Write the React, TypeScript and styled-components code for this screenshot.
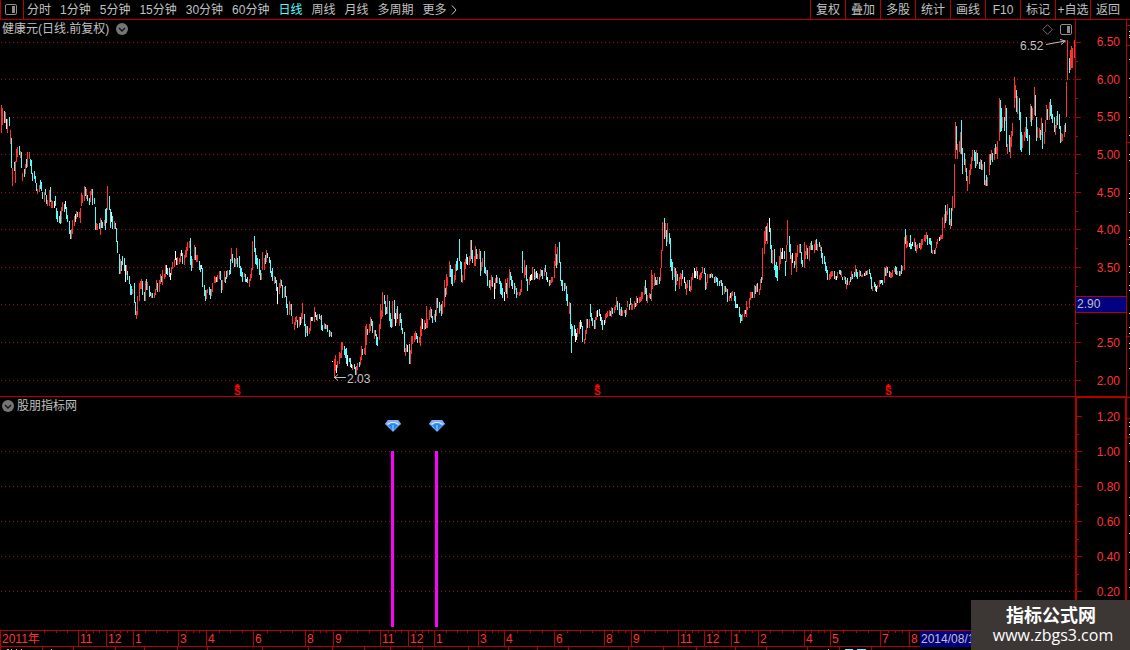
import React from "react";
import styled, { createGlobalStyle, css } from "styled-components";

const LINE = "#b40000";
const RED = "#ff3232";
const CYAN = "#54fcfc";
const GREY = "#c0c0c0";
const NAVY = "#000080";

const GlobalStyle = createGlobalStyle`
  * { box-sizing: border-box; }
  body { margin: 0; background: #000; }
  ul, ol, h1, h2, p { margin: 0; padding: 0; list-style: none; font: inherit; }
  button { margin: 0; padding: 0; border: 0; background: none; color: inherit; font: inherit; cursor: pointer; }
`;

/* Each bar: x, colour key (r rise, c fall, w flat), top-bottom */
const BARS = `
1r105-133 2r108-125 4c111-123 5r112-123 6w119-129 7r119-133 9c117-126 10r130-144 11c138-168 12r168-186 14c162-171 15r161-183 16r149-162 17r147-157 19c146-155 20r151-158 21c152-168 22r173-181 24c169-177 25r164-174 26c159-168 27r152-167 29r152-159 30c159-166 31c160-174 32c173-181 34c171-179 35c176-183 36c183-191 37r189-194 39r185-192 40c180-189 41c182-191 42c192-199 44r192-202 45c189-195 46c195-204 47r200-206 49r190-206 50c187-202 51r200-208 52r201-208 54w201-208 55c196-206 56c208-219 57c211-222 59c216-223 60c211-224 61r207-223 62r202-211 64c204-212 65w201-209 66c207-219 67c215-222 69c221-234 70c230-239 71r229-239 72r220-234 74r216-226 75w214-222 76r211-219 77c212-217 79r212-218 80r208-223 81r193-206 82r195-203 84r186-201 85c187-196 86r189-199 87c195-201 89c198-205 90r191-202 91r189-195 92c189-205 94c198-204 95c207-230 96r223-230 97r224-230 99c223-229 100r218-235 101c220-228 102c222-228 104r220-226 105c209-230 106c208-223 107r186-210 109c196-210 110c209-228 111w212-222 112c216-229 114r221-229 115c223-229 116c228-242 117c241-253 119c254-274 120r259-274 121c261-271 122c256-265 124c258-271 125w265-282 126r265-275 127c271-280 129c276-284 130c284-295 131c286-295 132r289-294 134c283-303 135c302-315 136r311-319 137r296-315 139r283-301 140r281-289 141r279-289 142c281-295 144c292-301 145r281-301 146c279-290 147r282-290 149c286-297 150c292-296 151r293-298 152c293-298 154r293-298 155r289-295 156r280-290 157c283-292 159r280-292 160r274-284 161c276-282 162r270-285 164r274-279 165r265-277 166w265-274 167c268-275 169c268-277 170w273-280 171r267-275 172r262-269 174r259-267 175w251-260 176w258-265 177r257-265 179r258-264 180r253-262 181w250-256 182c253-264 184r255-265 185r250-258 186r247-257 187r242-251 189r241-248 190c238-265 191c256-271 192r259-268 194r245-260 195c247-260 196r255-262 197r255-262 199c261-270 200c265-272 201w265-269 202c268-287 204c285-296 205c290-301 206r290-299 207r289-293 209c287-295 210c289-299 211r289-296 212r283-292 214r276-283 215r277-283 216w277-282 217r275-282 219r271-279 220c271-280 221c280-293 222r280-290 224r271-282 225c277-283 226c271-279 227r270-277 229c270-275 230c259-274 231r248-261 232c254-263 234c258-267 235r259-267 236r248-264 237c258-267 239c256-268 240c266-276 241c268-277 242c272-282 244r273-277 245c274-282 246w279-282 247c277-283 249r279-287 250r274-281 251r268-278 252r241-270 254c236-252 255c248-264 256c255-265 257c258-269 259c259-275 260c270-280 261r273-280 262r252-270 264r258-270 265c255-264 266r250-262 267c253-258 269c257-263
270c260-273 271c271-277 272c268-281 274r276-284 275c277-283 276c280-291 277w287-304 279r283-294 280r279-288 281c280-286 282c285-298 284r287-298 285c286-297 286c296-308 287c304-315 289r301-315 290r304-310 291c304-316 292r316-324 294r322-330 295r317-325 296r316-322 297c320-328 299r317-327 300w317-325 301r313-323 302r303-319 304c314-326 305c324-337 306r326-333 307c326-336 309r328-334 310r317-331 311w317-321 312c317-321 314r307-322 315w312-317 316c315-320 317r314-321 319c314-319 320r316-320 321c315-330 322c325-331 324r323-329 325c324-329 326r325-329 327c325-332 329c330-337 330r331-336 331c332-337 332w361-362 334r359-378 335r355-371 336w365-373 337r361-368 339r352-364 340r353-358 341r342-358 342r342-350 344c346-355 345c349-358 346c348-364 347w355-366 349c358-362 350c358-367 351w364-368 352r365-370 354c364-369 355c367-375 356r366-375 357r363-370 359c362-367 360r357-365 361r346-360 362c349-355 364r348-354 365r326-355 366r324-345 367c329-335 369r324-333 370r317-331 371c319-326 372c321-333 374r330-339 375c330-336 376c334-345 377c337-346 379r324-340 380r304-329 381r310-319 382r292-317 384c295-304 385c301-315 386c307-314 387r295-314 389c301-321 390c313-327 391c319-328 392r301-327 394c300-319 395w313-326 396r309-323 397c306-319 399r314-326 400c313-323 401c319-330 402c328-334 404c332-352 405r348-356 406r344-352 407w345-352 409c344-364 410r350-364 411r336-354 412r336-344 414r333-342 415r331-340 416c333-339 417c336-343 419r337-343 420r326-346 421r318-336 422w319-329 424r320-330 425c323-329 426r306-328 427r319-328 429r310-320 430r307-317 431c309-318 432c316-323 434r314-320 435c310-322 436r298-316 437c298-308 439c302-313 440r305-311 441c304-316 442r301-314 444r280-307 445c288-297 446r274-295 447r277-286 449r261-277 450c265-277 451c269-284 452c269-286 454r275-283 455r264-280 456c261-271 457c258-270 459c239-261 460c261-269 461c262-282 462r275-283 464r262-280 465r259-269 466c254-264 467w257-265 469r256-265 470r240-261 471c240-259 472c250-263 474r256-266 475r246-266 476c249-259 477r254-259 479r249-259 480c251-276 481r262-271 482r258-267 484c251-273 485c267-274 486r270-276 487c270-286 489c280-288 490r280-290 491r275-286 492c277-287 494w283-299 495r278-289 496c275-283 497r277-283 499c278-284 500c281-294 501c283-295 502c288-298 504w292-301 505r279-292 506c283-294 507r278-298 509r269-288 510c272-280 511c276-286 512c280-289 514c283-294 515r286-290 516c288-298 517r292-295 519r292-296 520r289-295 521r280-292 522c251-273 524r260-278 525r267-275 526c265-281 527c279-291 529r277-285 530w275-281 531w274-280 532r267-280 534c269-280 535r272-279 536w271-278 537c273-279 539r274-280 540r269-277 541c270-276 542c270-279 544r268-276 545c265-272 546c272-280 547w277-282 549c280-286 550r280-285 551r277-283 552r277-282 554r261-278 555r244-266 556c254-268 557r247-265 559c242-263
560c262-281 561c280-286 562c280-291 564c283-291 565r283-289 566c286-301 567c294-306 569r302-314 570c303-329 571c324-353 572c326-336 574c325-336 575w329-342 576w333-340 577r328-337 579r322-334 580w320-329 581c322-327 582c326-342 584r339-344 585r330-340 586r319-334 587c319-328 589r319-328 590c304-317 591c313-321 592c318-326 594c320-329 595r317-329 596r311-320 597w310-317 599c309-316 600w314-321 601c317-325 602c320-330 604w320-325 605r314-323 606r313-318 607r311-317 609r310-316 610c311-316 611r307-317 612c308-314 614r307-313 615r305-310 616r297-307 617c301-310 619c303-315 620r309-316 621c307-316 622r310-316 624r310-313 625c310-317 626r308-315 627r301-307 629c304-310 630c298-305 631r303-310 632r304-310 634r301-309 635c303-307 636r296-306 637w298-303 639r297-303 640r297-302 641r292-301 642r292-299 644r286-295 645c280-294 646c288-301 647r295-303 649r293-298 650c294-299 651r270-301 652r275-289 654r273-286 655c277-285 656c280-285 657r277-285 659c277-284 660r268-281 661r250-268 662r222-251 664c218-239 665r223-237 666c230-246 667r223-242 669c233-244 670c238-267 671c259-271 672c262-280 674r267-277 675c268-291 676r271-285 677c274-281 679r277-289 680r273-279 681r274-286 682c270-279 684w277-283 685c282-289 686r284-295 687r280-288 689c280-291 690r286-292 691r277-290 692r273-280 694w268-278 695w271-278 696r267-276 697c271-279 699r275-280 700r273-280 701r272-278 702r267-273 704c268-274 705c273-290 706r282-289 707r274-283 709r274-278 710c274-278 711r273-277 712c274-278 714c277-283 715r276-283 716c277-282 717c278-286 719c281-286 720r280-283 721c280-286 722c283-295 724r286-294 725c286-292 726r288-292 727c289-302 729r296-301 730w293-298 731r292-301 732r291-296 734c292-301 735c296-308 736c304-308 737w304-308 739c307-317 740c314-323 741c315-321 742r314-321 744r310-317 745w310-314 746r301-317 747r307-310 749r298-308 750r292-300 751r292-298 752c292-298 754r285-298 755c286-294 756r284-292 757c283-292 759r289-295 760r279-290 761c277-283 762r248-280 764r231-254 765r227-244 766c226-241 767r223-244 769w218-232 770c228-249 771c245-263 772r250-264 774c249-270 775c265-277 776c262-278 777c266-281 779r256-270 780r248-264 781c252-259 782w248-259 784c251-259 785c261-276 786r245-262 787r220-245 789c236-252 790c244-259 791r255-275 792w253-263 794c261-268 795r253-265 796r253-272 797r245-257 799r244-253 800c244-253 801c252-264 802c260-267 804r242-268 805r251-259 806r245-255 807c248-259 809r246-261 810r243-250 811c241-250 812c245-250 814r244-253 815r240-250 816c239-250 817r244-251 819c242-247 820r245-251 821c247-258 822c253-264 824c256-264 825c262-271 826c266-273 827c270-280 829r274-280
830r272-279 831r271-277 832r271-276 834c271-279 835r276-280 836w276-280 837r272-278 839c270-274 840c270-275 841r271-277 842c277-280 844r276-280 845c277-284 846r280-289 847c278-285 849r281-285 850c277-282 851r271-280 852c274-279 854c272-277 855r265-276 856c269-277 857c272-279 859r270-277 860c271-276 861r275-277 862r274-277 864w273-276 865r271-276 866c271-275 867r270-275 869c269-274 870c273-279 871c277-289 872r286-291 874c282-287 875c284-291 876w286-292 877r285-289 879r280-287 880c280-284 881w280-283 882c280-285 884r267-283 885c268-276 886r266-276 887c267-273 889c271-277 890r272-278 891r273-278 892r270-277 894r268-272 895c266-274 896c267-275 897r271-275 899c271-276 900r271-276 901c265-274 902r266-271 904r237-270 905c229-244 906r235-248 907r241-247 909w243-247 910c235-249 911c244-249 912w242-246 914r238-247 915c242-251 916r245-253 917r244-249 919c243-248 920r243-250 921r239-249 922r239-245 924r235-241 925r235-242 926r232-239 927c235-245 929c238-244 930c238-245 931c241-253 932r250-254 934c250-254 935r248-254 936r242-248 937r239-244 939w237-241 940r235-240 941r235-239 942r217-239 944r214-228 945c205-223 946r211-221 947r204-215 949c208-225 950r219-229 951c208-226 952r196-211 954r164-208 955r122-159 956c126-150 957r144-159 959r141-152 960r132-154 961c120-154 962c148-174 964c153-165 965r159-172 966c168-181 967r176-191 969r170-184 970r164-175 971r157-169 972r150-161 974c150-161 975c152-168 976r150-166 977c153-164 979c162-169 980r159-169 981c160-170 982r164-170 984c162-185 985r180-186 986c175-186 987r177-186 989r154-175 990c154-165 991r150-160 992c153-162 994r148-160 995c144-154 996r147-154 997r141-159 999r98-141 1000c100-132 1001c108-131 1002r117-128 1004c117-131 1005r105-121 1006c108-147 1007r144-154 1009c135-152 1010r137-158 1011r131-147 1012r123-136 1014r77-108 1015r85-98 1016c90-112 1017r96-114 1019c98-120 1020c112-150 1021c132-152 1022r135-148 1024r132-141 1025r127-137 1026c117-138 1027c129-141 1029c135-155 1030r104-122 1031c106-126 1032r108-120 1034r87-115 1035c95-116 1036c117-141 1037r127-138 1039r128-138 1040c130-140 1041r118-135 1042c123-149 1044r132-144 1045r120-132 1046r105-120 1047c109-120 1049r102-120 1050c99-116 1051c105-119 1052c114-123 1054c117-132 1055r125-135 1056r116-128 1057c111-125 1059c114-129 1060c126-143 1061r133-142 1062r134-141 1064r125-137 1065c123-132 1066r82-117 1067r40-80 1069c58-73 1070r50-70 1071r46-68 1072r48-68 1074r40-58
`;

const paths: Record<string, string> = { r: "", c: "", w: "" };
for (const [, x, key, top, bottom] of BARS.matchAll(/(\d+)([rcw])(\d+)-(\d+)/g)) {
  const h = Number(bottom) - Number(top);
  paths[key] += `M${x} ${top}h1v${h}h-1z`;
}

const PLOT_W = 1075;
const PRICE_TOP = 20;
const PRICE_H = 376;
const SIGNAL_TOP = 397;
const SIGNAL_H = 233;

const PERIODS = ["分时", "1分钟", "5分钟", "15分钟", "30分钟", "60分钟", "日线", "周线", "月线", "多周期"];
const ACTIONS = ["复权", "叠加", "多股", "统计", "画线", "F10", "标记", "+自选", "返回"];
const PRICES = ["6.50", "6.00", "5.50", "5.00", "4.50", "4.00", "3.50", "", "2.50", "2.00"];
const PRICE_ROWS = [42, 79, 117, 154, 192, 229, 267, 304, 342, 380];
const PRICE_MINOR = [61, 98, 136, 173, 211, 248, 286, 323, 361];
const LEVELS = ["1.20", "1.00", "0.80", "0.60", "0.40", "0.20"];
const LEVEL_ROWS = [416, 451, 486, 521, 556, 591];
const LEVEL_MINOR = [434, 469, 504, 539, 574];
const SIGNALS = [391, 435];
const DIVIDENDS = [237, 597, 888];
const MONTHS: [string, number][] = [
  ["2011年", 78], ["11", 28], ["12", 27], ["1", 45], ["3", 28], ["4", 47], ["6", 52], ["8", 28],
  ["9", 47], ["11", 28], ["12", 26], ["1", 44], ["3", 26], ["4", 50], ["6", 50], ["8", 27], ["9", 47],
  ["11", 26], ["12", 27], ["1", 27], ["2", 46], ["4", 26], ["5", 50], ["7", 29], ["8", 11],
];
const CURSOR_SPAN = 210;
const TIMELINE_TRACKS = [...MONTHS.map(([, span]) => span), CURSOR_SPAN]
  .map((span) => `minmax(0, ${span}fr)`)
  .join(" ");
const EDGE_TICKS = [25, 45, 142, 239, 336, 397, 418, 437];
const EDGE_DOTS = [
  31, 35, 37, 59, 78, 97, 117, 135, 154, 160, 193, 198, 212, 230, 237, 244, 266, 272, 285, 290, 313, 327,
  333, 343, 348, 368, 422, 426, 434, 443, 461, 497, 515, 533, 552, 569, 587,
];
const FOOT_TICKS = [0, 42, 73, 115, 144, 177, 207, 262, 308, 332, 364, 390, 422, 468, 508, 537, 568, 628, 663, 696, 735, 766, 807, 839, 871];
const FOOT_MARKS: [number, number, string][] = [
  [7, 2, GREY], [11, 1, GREY], [16, 1, GREY], [21, 1, GREY], [51, 1, GREY], [828, 1, GREY], [845, 8, CYAN], [857, 9, CYAN],
];

const Window = styled.main`
  position: relative;
  display: flex;
  flex-direction: column;
  min-height: 100vh;
  overflow: hidden;
  background: #000;
  color: ${GREY};
  font-family: "Liberation Sans", "Noto Sans CJK SC", sans-serif;
  font-size: 12px;
  line-height: 14px;
`;

const Toolbar = styled.header`
  display: flex;
  height: 20px;
  border-bottom: 1px solid ${LINE};
`;

const PanelToggle = styled.button`
  display: flex;
  align-items: center;
  width: 24px;
  height: 19px;
  padding-left: 4px;
  border: solid ${LINE};
  border-width: 0 1px;
`;

const Periods = styled.nav`
  display: flex;
  flex: 1;
  align-items: center;
  gap: 9px;
  padding-left: 3px;
  white-space: nowrap;
`;

const Period = styled.button<{ $active?: boolean }>`
  display: flex;
  align-items: center;
  gap: 4px;
  color: ${(p) => (p.$active ? CYAN : GREY)};
`;

const Actions = styled.nav`
  display: flex;
  padding-right: 5px;
`;

const Action = styled.button`
  width: 35px;
  height: 19px;
  border-left: 1px solid ${LINE};
  text-align: center;
  white-space: nowrap;
`;

const Body = styled.div`
  display: flex;
  flex: 1;
`;

const Panels = styled.div`
  display: flex;
  flex: 1;
  flex-direction: column;
  min-width: 0;
`;

const Panel = styled.section<{ $share: number; $divided?: boolean }>`
  display: flex;
  flex: ${(p) => p.$share} 1 0;
  ${(p) => p.$divided && css`border-bottom: 1px solid ${LINE};`}
`;

const Plot = styled.div`
  position: relative;
  flex: 1;
  min-width: 0;
`;

const PlotSvg = styled.svg`
  position: absolute;
  inset: 0;
  width: 100%;
  height: 100%;
`;

const Heading = styled.div<{ $gap: number }>`
  position: absolute;
  top: 2px;
  left: 2px;
  display: flex;
  align-items: center;
  gap: ${(p) => p.$gap}px;
  height: 14px;
`;

const RoundButton = styled.button`
  display: flex;
  width: 12px;
  height: 12px;
`;

const PlotTools = styled.div`
  position: absolute;
  top: 4px;
  right: 3px;
  display: flex;
  gap: 7px;
  height: 11px;
`;

const Marker = styled.div<{ $x: number; $y: number; $h: number; $top: number }>`
  position: absolute;
  left: ${(p) => (p.$x / PLOT_W) * 100}%;
  top: ${(p) => ((p.$y - p.$top) / p.$h) * 100}%;
  display: flex;
`;

const Axis = styled.div<{ $heavy?: boolean }>`
  position: relative;
  display: flex;
  width: 51px;
  border-left: ${(p) => (p.$heavy ? 2 : 1)}px solid ${LINE};
  ${(p) => p.$heavy && css`border-top: 1px solid ${LINE}; border-right: 1px solid ${LINE};`}
`;

const AxisTicks = styled.svg`
  flex: none;
  width: 5px;
  height: 100%;
`;

const AxisLabels = styled.ol<{ $top: number; $bottom: number; $right: number }>`
  display: flex;
  flex: 1;
  flex-direction: column;
  justify-content: space-between;
  padding: ${(p) => p.$top}px ${(p) => p.$right}px ${(p) => p.$bottom}px 0;
  color: ${RED};
  text-align: right;
  li { height: 14px; }
`;

const CursorPrice = styled.output`
  position: absolute;
  top: ${(276 / PRICE_H) * 100}%;
  left: 0;
  right: 0;
  height: 17px;
  padding-left: 1px;
  border: solid ${LINE};
  border-width: 1px 0;
  background: ${NAVY};
  color: ${GREY};
  line-height: 15px;
`;

const Edge = styled.svg`
  flex: none;
  width: 4px;
  height: auto;
`;

const Timeline = styled.ol`
  display: grid;
  grid-template-columns: ${TIMELINE_TRACKS};
  height: 17px;
  border: solid ${LINE};
  border-width: 1px 0;
  color: ${RED};
`;

const Month = styled.li`
  display: flex;
  flex-direction: column;
  border-left: 1px solid ${LINE};
  padding-left: 1px;
  white-space: nowrap;
  line-height: 13px;
`;

const MonthTicks = styled.span<{ $first: boolean }>`
  display: flex;
  justify-content: space-evenly;
  height: 2px;
  ${(p) => p.$first && css`padding-left: 32px;`}
  i { width: 1px; background: ${LINE}; }
`;

const CursorDate = styled.li`
  padding-left: 1px;
  background: ${NAVY};
  color: ${GREY};
  line-height: 16px;
`;

const Foot = styled.svg`
  display: block;
  width: 100%;
  height: 3px;
`;

const Watermark = styled.aside`
  position: absolute;
  right: 0;
  bottom: 0;
  width: 159px;
  height: 50px;
  padding: 4px 0 0 5px;
  background: #3c3735;
  color: #fff;
  text-align: center;
`;

const SiteName = styled.p`
  padding-right: 4px;
  font: bold 18px/21px "Noto Sans CJK SC", sans-serif;
`;

const SiteLink = styled.a`
  display: block;
  color: inherit;
  font: 16px/20px "Open Sans", sans-serif;
  text-decoration: none;
`;

const PanelIcon = () => (
  <svg width="12" height="11" viewBox="0 0 12 11" fill="none" aria-hidden="true">
    <rect x=".5" y=".5" width="11" height="10" rx="1.5" stroke="#8c8c8c" />
    <rect x="7" y="2" width="3" height="7" fill="#8c8c8c" />
  </svg>
);

const ChevronDisc = () => (
  <svg width="12" height="12" viewBox="0 0 12 12" aria-hidden="true">
    <circle cx="6" cy="6" r="6" fill="#757575" />
    <path d="M3 5l3 3 3-3" fill="none" stroke="#141414" strokeWidth="1.4" />
  </svg>
);

const Gem = () => (
  <svg width="16" height="12" viewBox="0 0 16 12" aria-hidden="true">
    <path d="M3 0h10l3 4-8 8-8-8z" fill="#4a94ee" />
    <path d="M3 0h10l3 4-2 1-3-2H5L2 5 0 4z" fill="#86acf0" />
    <path d="M2 4l4-2h4l4 2-1 1-3-2H6L3 5z" fill="#d9ecff" />
    <path d="M4 5l4-1 4 1-4 6z" fill="#1f86f2" />
    <path d="M8 5v6" stroke="#a9d8ff" strokeWidth="1" />
    <path d="M3 6l2 2" stroke="#7db9ff" strokeWidth="1" />
  </svg>
);

const Grid = ({ rows }: { rows: number[] }) => (
  <g stroke="#9c0c0c" strokeDasharray="1 3">
    {rows.map((y) => (
      <path key={y} d={`M1 ${y + 0.5}H${PLOT_W}`} />
    ))}
  </g>
);

const Ticks = ({ view, major, minor }: { view: string; major: number[]; minor: number[] }) => (
  <AxisTicks viewBox={view} preserveAspectRatio="none" shapeRendering="crispEdges" fill={LINE} aria-hidden="true">
    {major.map((y) => <rect key={y} x="0" y={y} width="5" height="1" />)}
    {minor.map((y) => <rect key={y} x="0" y={y} width="2" height="1" />)}
  </AxisTicks>
);

export default function App() {
  return (
    <Window>
      <GlobalStyle />
      <Toolbar>
        <PanelToggle aria-label="面板"><PanelIcon /></PanelToggle>
        <Periods>
          {PERIODS.map((label) => (
            <Period key={label} $active={label === "日线"}>{label}</Period>
          ))}
          <Period>
            更多
            <svg width="6" height="10" viewBox="0 0 6 10" fill="none" stroke={GREY} aria-hidden="true">
              <path d="M1 .5L5 5 1 9.500" />
            </svg>
          </Period>
        </Periods>
        <Actions>
          {ACTIONS.map((label) => <Action key={label}>{label}</Action>)}
        </Actions>
      </Toolbar>

      <Body>
        <Panels>
          <Panel $share={377} $divided>
            <Plot>
              <PlotSvg viewBox={`0 ${PRICE_TOP} ${PLOT_W} ${PRICE_H}`} preserveAspectRatio="none" shapeRendering="crispEdges">
                <Grid rows={PRICE_ROWS} />
                <path d={paths.r} fill={RED} />
                <path d={paths.c} fill={CYAN} />
                <path d={paths.w} fill="#fff" />
              </PlotSvg>
              <Heading $gap={7}>
                <h1>健康元(日线.前复权)</h1>
                <RoundButton aria-label="主图菜单"><ChevronDisc /></RoundButton>
              </Heading>
              <PlotTools>
                <svg width="11" height="11" viewBox="0 0 11 11" fill="none" stroke="#6e6e6e" aria-hidden="true">
                  <path d="M5.500.7l4.800 4.800-4.800 4.800L.7 5.500z" />
                </svg>
                <PanelIcon />
              </PlotTools>
              <Marker $x={1020} $y={39} $h={PRICE_H} $top={PRICE_TOP}>
                6.52
                <svg width="24" height="10" viewBox="0 0 24 10" fill="none" stroke={GREY} aria-hidden="true">
                  <path d="M3 5.500L22 2M17 .5l5.500 1.500L18 5.500" />
                </svg>
              </Marker>
              <Marker $x={333} $y={372} $h={PRICE_H} $top={PRICE_TOP}>
                <svg width="14" height="10" viewBox="0 0 14 10" fill="none" stroke={GREY} aria-hidden="true">
                  <path d="M1 5.500h12M5 2.500l-3.500 3L5 8.500" />
                </svg>
                2.03
              </Marker>
              {DIVIDENDS.map((x) => (
                <Marker key={x} $x={x - 4} $y={384} $h={PRICE_H} $top={PRICE_TOP}>
                  <svg width="9" height="12" viewBox="0 0 9 12" fill="#ff0000" role="img" aria-label="分红">
                    <path d="M4 0h1l2 2v1H2V2z" />
                    <text x="1" y="11" fontSize="10" fontWeight="bold">S</text>
                  </svg>
                </Marker>
              ))}
            </Plot>
            <Axis>
              <Ticks view={`0 ${PRICE_TOP} 5 ${PRICE_H}`} major={PRICE_ROWS} minor={PRICE_MINOR} />
              <AxisLabels $top={15} $bottom={8} $right={6}>
                {PRICES.map((p, i) => <li key={i}>{p}</li>)}
              </AxisLabels>
              <CursorPrice>2.90</CursorPrice>
            </Axis>
          </Panel>

          <Panel $share={233}>
            <Plot>
              <PlotSvg viewBox={`0 ${SIGNAL_TOP} ${PLOT_W} ${SIGNAL_H}`} preserveAspectRatio="none" shapeRendering="crispEdges">
                <Grid rows={LEVEL_ROWS.slice(1)} />
                {SIGNALS.map((x) => <rect key={x} x={x} y="451" width="3" height="176" fill="#ff00ff" />)}
              </PlotSvg>
              <Heading $gap={3}>
                <RoundButton aria-label="副图菜单"><ChevronDisc /></RoundButton>
                <h2>股朋指标网</h2>
              </Heading>
              {SIGNALS.map((x) => (
                <Marker key={x} $x={x - 6} $y={420} $h={SIGNAL_H} $top={SIGNAL_TOP}><Gem /></Marker>
              ))}
            </Plot>
            <Axis $heavy>
              <Ticks view="0 398 5 232" major={LEVEL_ROWS} minor={LEVEL_MINOR} />
              <AxisLabels $top={12} $bottom={31} $right={5}>
                {LEVELS.map((p) => <li key={p}>{p}</li>)}
              </AxisLabels>
            </Axis>
          </Panel>
        </Panels>

        <Edge viewBox="1126 20 4 610" preserveAspectRatio="none" shapeRendering="crispEdges" fill={LINE} aria-hidden="true">
          <rect x="1126" y="20" width="1" height="610" />
          {EDGE_TICKS.map((y) => <rect key={y} x="1127" y={y} width="3" height="1" />)}
          {EDGE_DOTS.map((y) => <rect key={y} x="1129" y={y} width="1" height="1" fill="#e0e0e0" />)}
        </Edge>
      </Body>

      <Timeline>
        {MONTHS.map(([label, span], i) => (
          <Month key={i}>
            <MonthTicks $first={i === 0}>{span > 20 && <><i /><i /><i /></>}</MonthTicks>
            {label}
          </Month>
        ))}
        <CursorDate>2014/08/1</CursorDate>
      </Timeline>
      <Foot viewBox="0 0 1130 3" preserveAspectRatio="none" shapeRendering="crispEdges" aria-hidden="true">
        {FOOT_TICKS.map((x) => <rect key={x} x={x} y="0" width="1" height="3" fill={LINE} />)}
        {FOOT_MARKS.map(([x, w, fill]) => <rect key={x} x={x} y="2" width={w} height="1" fill={fill} />)}
      </Foot>

      <Watermark>
        <SiteName>指标公式网</SiteName>
        <SiteLink href="#">www.zbgs3.com</SiteLink>
      </Watermark>
    </Window>
  );
}
